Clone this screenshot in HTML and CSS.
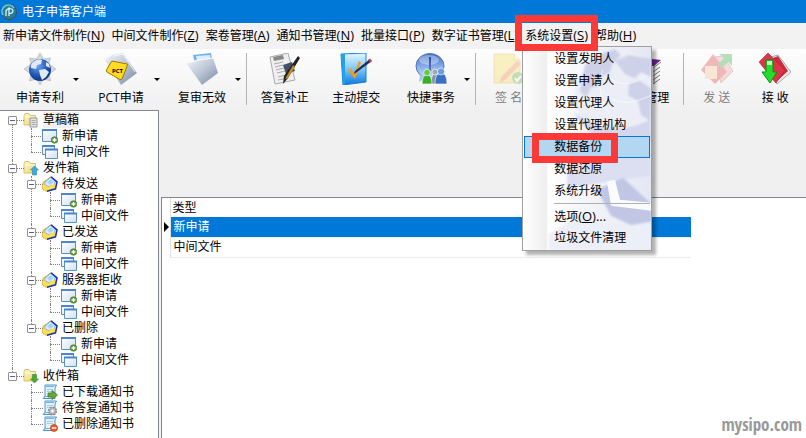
FILE: index.html
```
<!DOCTYPE html>
<html lang="zh-CN">
<head>
  <meta charset="UTF-8">
  <title>电子申请客户端</title>
  <link rel="stylesheet" href="styles.css">
</head>
<body>
  <!-- shared icons -->
  <svg class="sprite" aria-hidden="true">
    <defs>
      <linearGradient id="gFolder" x1="0" y1="0" x2="1" y2="1"><stop offset="0" stop-color="#fffbd0"/><stop offset="1" stop-color="#efcf62"/></linearGradient>
      <linearGradient id="gWin" x1="0" y1="0" x2="1" y2="1"><stop offset="0" stop-color="#fff"/><stop offset="1" stop-color="#cfdff2"/></linearGradient>
      <linearGradient id="gSilver" x1="0" y1="0" x2="1" y2="1"><stop offset="0" stop-color="#f4f6fa"/><stop offset=".5" stop-color="#bcc6d6"/><stop offset="1" stop-color="#76859f"/></linearGradient>
      <linearGradient id="gBook" x1="0" y1="0" x2="0" y2="1"><stop offset="0" stop-color="#e4f7ff"/><stop offset=".5" stop-color="#7cc8fa"/><stop offset="1" stop-color="#0b79dd"/></linearGradient>
      <radialGradient id="gGlobe" cx=".4" cy=".3" r=".8"><stop offset="0" stop-color="#6fa8ea"/><stop offset=".6" stop-color="#1d50b0"/><stop offset="1" stop-color="#0b2a70"/></radialGradient>
      <linearGradient id="gBubble" x1="0" y1="0" x2="0" y2="1"><stop offset="0" stop-color="#3a66c4"/><stop offset=".5" stop-color="#86abe8"/><stop offset="1" stop-color="#cfe0fa"/></linearGradient>
    </defs>
    <symbol id="folder" viewBox="0 0 16 16">
      <path d="M1 3.500l1-2h4l1.500 2h5v9.500H1z" fill="url(#gFolder)" stroke="#dcc070"/>
      <path d="M2 5h10" stroke="#fff" opacity=".8"/>
    </symbol>
    <symbol id="draft" viewBox="0 0 16 16">
      <use href="#folder"/>
      <path d="M7 6h7v9H7z" fill="#e2e2e2" stroke="#999"/>
      <path d="M8.500 8.500h4M8.500 10.500h4M8.500 12.500h4" stroke="#aaa"/>
    </symbol>
    <symbol id="outbox" viewBox="0 0 16 16">
      <use href="#folder"/>
      <path d="M11.500 6l4 4h-2v5h-4v-5h-2z" fill="#3cacdc" stroke="#2389b8" stroke-width=".6"/>
    </symbol>
    <symbol id="inbox" viewBox="0 0 16 16">
      <use href="#folder"/>
      <path d="M11.500 15l4-4h-2V6.500h-4V11h-2z" fill="#4aa83c" stroke="#338a2a" stroke-width=".6"/>
    </symbol>
    <symbol id="newwin" viewBox="0 0 16 16">
      <path d="M.5 1.500h14v12H.5z" fill="url(#gWin)" stroke="#5b8fc9"/>
      <path d="M0 1h15v2H0z" fill="#4d86c6"/>
      <circle cx="12.500" cy="12" r="3.300" fill="#5d963c" stroke="#3f7324" stroke-width=".6"/>
      <path d="M12.500 10v4M10.500 12h4" stroke="#fff" stroke-width="1.300"/>
    </symbol>
    <symbol id="wins" viewBox="0 0 16 16">
      <path d="M.5 1.500h12v9H.5z" fill="url(#gWin)" stroke="#5b8fc9"/>
      <path d="M0 1h13v2H0z" fill="#4d86c6"/>
      <path d="M3.500 5.500h12v9h-12z" fill="url(#gWin)" stroke="#5b8fc9"/>
      <path d="M3 4.500h13v2H3z" fill="#4d86c6"/>
    </symbol>
    <symbol id="mail" viewBox="0 0 16 16">
      <path d="M1 6.500L9 .8l6 5-1.500 7L4 15.200.8 13z" fill="#f9e06c" stroke="#d3a41c"/>
      <path d="M3 6l6-5 4.500 4-1.500 4-5 1.500L3 9z" fill="#d9efff" stroke="#5b9fe0" stroke-width=".7"/>
      <path d="M5 6l4-3 3 3-4 3z" fill="#a5d3f8"/>
      <path d="M1 8l5 3 8-4-1 6-9 2-3-2z" fill="#ffdf4c"/>
      <path d="M9 .8l6 5-1.500 7-8.500 2.400" fill="none" stroke="#1633bd" stroke-width="1.500"/>
    </symbol>
    <symbol id="scroll" viewBox="0 0 16 16">
      <path d="M3 1h11.500L13 4v10.500H1.500L3 12z" fill="#e3f2fd" stroke="#4b94d4"/>
      <path d="M4 2.500h8M1 14.500l2-2h9" stroke="#78b4e4" fill="none"/>
      <path d="M5 5.500h6M5 7.500h6" stroke="#a6cdec"/>
    </symbol>
    <symbol id="downloaded" viewBox="0 0 16 16">
      <use href="#scroll"/>
      <path d="M6 9h4V6.500l5.500 4.500-5.500 4.500V13H6z" fill="#62a83c" stroke="#3c7c22" stroke-width=".8"/>
    </symbol>
    <symbol id="waiting" viewBox="0 0 16 16">
      <use href="#scroll"/>
      <circle cx="10.500" cy="11" r="3.600" fill="#c8c8c8" stroke="#8b8b8b" stroke-width="2" stroke-dasharray="1.800 1"/>
      <circle cx="10.500" cy="11" r="2.900" fill="#c8c8c8" stroke="#999" stroke-width=".6"/>
      <circle cx="10.500" cy="11" r="1.200" fill="#fff"/>
    </symbol>
    <symbol id="deleted" viewBox="0 0 16 16">
      <use href="#scroll"/>
      <circle cx="12" cy="12" r="3.600" fill="#ee5a24" stroke="#c43d12" stroke-width=".6"/>
      <path d="M9.800 12h4.400" stroke="#fff" stroke-width="1.500"/>
    </symbol>
  </svg>

  <header class="titlebar">
    <svg class="logo" viewBox="0 0 16 16">
      <circle cx="8" cy="8" r="7.500" fill="#247f96" stroke="#504a4c"/>
      <path d="M2 11a6.500 6.500 0 0 1 11-7" fill="none" stroke="#70c6d8" stroke-width="1.500"/>
      <path d="M5 12V6.500L8 4v8M8 4.500q4 0 4 2.500T8 9.500" fill="none" stroke="#e6fbff" stroke-width="1.200"/>
    </svg>
    <h1>电子申请客户端</h1>
  </header>

  <nav class="menubar">
    <button>新申请文件制作<span class="key">(<u>N</u>)</span></button>
    <button>中间文件制作<span class="key">(<u>Z</u>)</span></button>
    <button>案卷管理<span class="key">(<u>A</u>)</span></button>
    <button>通知书管理<span class="key">(<u>N</u>)</span></button>
    <button>批量接口<span class="key">(<u>P</u>)</span></button>
    <button>数字证书管理<span class="key">(<u>L</u>)</span></button>
    <div class="menu open">
      <button>系统设置<span class="key">(<u>S</u>)</span></button>
      <div class="mark mark-menu"></div>
      <div class="popup">
        <svg class="popup-art" viewBox="0 0 104 202" preserveAspectRatio="none">
          <defs>
            <linearGradient id="art" x1="0" y1="0" x2="1" y2="0"><stop offset="0" stop-color="#fff"/><stop offset="1" stop-color="#c9cde6"/></linearGradient>
            <filter id="soft"><feGaussianBlur stdDeviation="1"/></filter>
          </defs>
          <path d="M0 0h104v202H0z" fill="url(#art)" opacity=".5"/>
          <g filter="url(#soft)">
            <circle cx="74" cy="50" r="46" fill="#eceef7"/>
            <path d="M38 18l18-12 12-4 6 6-8 8-3 9-8 4-2 9-9 3-5 9-6-6z" fill="#ced1e6"/>
            <path d="M68 14l14-6 22 4v18l-10-5-6 6-10-4zM82 36l10-3 12 8v33l-10-6-3-14-10-6z" fill="#ced2e8"/>
            <path d="M26 64q36 30 78 8v22q-52 14-78-30" fill="#ccd1ea" opacity=".8"/>
            <path d="M20 112l60-10 24 6v20l-84 12z" fill="#dcdff1"/>
            <path d="M50 142l26-12 28 26v30l-40-18z" fill="#c0c6e4"/>
            <path d="M2 186l34-20 30 14 38-6v28H2z" fill="#eceef8"/>
          </g>
          <path d="M60 134l8-2 5 20 31 3v8l-40-5z" fill="#fafbff"/>
          <path d="M62 30q16 14 38-2M56 44q16 20 48 4M56 22q-8 24 6 44" fill="none" stroke="#fff" opacity=".6"/>
        </svg>
        <button>设置发明人</button>
        <button>设置申请人</button>
        <button>设置代理人</button>
        <button>设置代理机构</button>
        <button class="active">数据备份<span class="mark mark-item"></span></button>
        <button>数据还原</button>
        <button>系统升级</button>
        <hr>
        <button>选项<span class="key">(<u>O</u>)...</span></button>
        <button>垃圾文件清理</button>
      </div>
    </div>
    <button>帮助<span class="key">(<u>H</u>)</span></button>
  </nav>

  <div class="toolbar">
    <div class="split">
      <button class="tool">
        <svg viewBox="0 0 32 32">
          <path d="M16 0l3.500 6 7-1-1.500 6 7 5-7 5 1.500 7-7-2L16 32l-3.500-6-7 2L7 21l-7-5 7-5-1.500-6 7 1z" fill="#d3d6da" stroke="#b0b4ba" stroke-width=".6"/>
          <circle cx="16" cy="17" r="11" fill="url(#gGlobe)"/>
          <path d="M9 9q5-4 9-2l-1 4-4 1-1 4-5-1q-1-3 2-6M15 17l6-1 4 3-3 5-4 3-2-5zM22 9l3 2 1 4-4-2z" fill="#dfe9f8"/>
        </svg>
        <span>申请专利</span>
      </button>
      <button class="drop" aria-label="更多"></button>
    </div>
    <div class="split">
      <button class="tool">
        <svg viewBox="0 0 32 32">
          <path d="M7 2l11-2 14 20-16 12L0 7z" fill="url(#gSilver)"/>
          <path d="M9 3l9-2 12 18" fill="none" stroke="#fff" opacity=".8"/>
          <path d="M7 8l15 3q1 0 .5 1L17 26q-1 1-2 .5L2 19q-1-1-.5-2L6 9z" fill="#ffdc22" stroke="#a07800"/>
          <text class="pct" x="7" y="20">PCT</text>
        </svg>
        <span>PCT申请</span>
      </button>
      <button class="drop" aria-label="更多"></button>
    </div>
    <div class="split">
      <button class="tool">
        <svg viewBox="0 0 32 32">
          <path d="M7 2l18-2 3 16-17 3z" fill="#6fb2f0"/>
          <path d="M10 3l14-1 2 10-14 3z" fill="#d8edff"/>
          <path d="M0 10l12-3 15-2 5 15-16 12z" fill="url(#gSilver)"/>
          <path d="M1 10l12-3 14-2" fill="none" stroke="#fff"/>
        </svg>
        <span>复审无效</span>
      </button>
      <button class="drop" aria-label="更多"></button>
    </div>
    <div class="sep"></div>
    <button class="tool wide">
      <svg viewBox="0 0 32 32">
        <path d="M1 4l18-4 7 27-20 4z" fill="#efefef" stroke="#aaa"/>
        <path d="M4 4l10-2 1 4-10 2z" fill="#888"/>
        <path d="M5 11l9-2M6 14l8-2M7 17l8-2M8 20l8-2M9 24l12-3M9 27l10-2" stroke="#aaa"/>
        <path d="M14 12l9-3 3 9-9 3z" fill="#41516a"/>
        <path d="M29 3l2 2-12 20-5 6 1-8z" fill="#222"/>
        <path d="M24 12l2 2-7 11-3 1z" fill="#c88b28"/>
      </svg>
      <span>答复补正</span>
    </button>
    <button class="tool wide">
      <svg viewBox="0 0 32 32">
        <path d="M1 1l25-1v29L3 32z" fill="url(#gBook)" stroke="#1682d8"/>
        <path d="M1 1h4v29l-2 2z" fill="#22a2ec"/>
        <path d="M8 17l3-2 3 6 5-13 2 1-6 17z" fill="#f69c18"/>
        <path d="M30 6l2 2-15 11-3 2 1-3z" fill="#222c58"/>
        <path d="M29 6l2 3" stroke="#d53c50" stroke-width="2"/>
      </svg>
      <span>主动提交</span>
    </button>
    <div class="split later">
      <button class="tool">
        <svg viewBox="0 0 32 32">
          <ellipse cx="15" cy="13" rx="14" ry="12.500" fill="url(#gBubble)" stroke="#5277b8"/>
          <path d="M5 22l-1 7 8-5z" fill="#a9c4ee"/>
          <ellipse cx="14" cy="7" rx="10" ry="5" fill="#fff" opacity=".35"/>
          <path d="M14 4h2l-.5 14h-1z" fill="#294c9c"/>
          <g stroke="#fff" stroke-width=".6">
            <path d="M16 31q0-10 4-10t4 10z" fill="#8a93a4"/><circle cx="20" cy="19" r="3" fill="#a0a9b8"/>
            <path d="M7 31q0-9 5-9t5 9z" fill="#3daf2d"/><circle cx="12" cy="19.500" r="3.300" fill="#62cc48"/>
            <path d="M20 31q0-11 6-11t6 11z" fill="#3b70c8"/><circle cx="26" cy="18.500" r="3.500" fill="#6a9ce2"/>
          </g>
        </svg>
        <span>快捷事务</span>
      </button>
      <button class="drop" aria-label="更多"></button>
    </div>
    <div class="sep"></div>
    <button class="tool" disabled>
      <svg viewBox="0 0 32 32">
        <path d="M1 1h20l6 6v23H1z" fill="#f6df58" stroke="#dcb93a"/>
        <path d="M21 1v6h6" fill="#fff3a8" stroke="#dcb93a"/>
        <path d="M24 8l4 3L12 27l-5 3 1-6z" fill="#ef8a54"/>
        <circle cx="25" cy="25" r="6" fill="#62b248"/>
        <path d="M22 25l2 3 4-5" fill="none" stroke="#fff" stroke-width="2"/>
      </svg>
      <span>签 名</span>
    </button>
    <button class="tool covered">
      <svg viewBox="0 0 32 32">
        <path d="M2 4l12 1 18 2-7 6L2 12z" fill="#6d2390"/>
        <path d="M24 15l8-6M24 19l7-5M24 23l7-5M24 27l7-5M24 31l7-5M25 13v18" stroke="#777"/>
        <path d="M2 10l20 4v18L2 27z" fill="#8f4cb0"/>
      </svg>
      <span>证书管理</span>
    </button>
    <div class="sep"></div>
    <button class="tool" disabled>
      <svg viewBox="0 0 32 32">
        <path d="M14 4l8-1 10 15-12 12z" fill="#f0a8a8" stroke="#c66"/>
        <path d="M0 17L12 1l14 18-12 12z" fill="#de4444"/>
        <path d="M4 13h12v13H4z" fill="#f8c890"/>
        <path d="M18 1h13v12l-4-4-6 6-4-4 6-6z" fill="#35ac45"/>
      </svg>
      <span>发 送</span>
    </button>
    <button class="tool">
      <svg viewBox="0 0 32 32">
        <path d="M12 4l7-2 13 17-14 12-6-6z" fill="#f2eeee" stroke="#888" stroke-width=".7"/>
        <path d="M14 5l5-2 10 15-12 11z" fill="#c92c3e"/>
        <path d="M0 9L9 0l17 17-9 13z" fill="#dc3448" stroke="#b02034" stroke-width=".6"/>
        <path d="M7 7h7v12h4l-7 11-8-11h4z" fill="#25dc2c" stroke="#0c8c18"/>
        <path d="M8 8h5v4H8z" fill="#c8ffc0"/>
      </svg>
      <span>接 收</span>
    </button>
  </div>

  <main>
    <aside class="tree">
      <ul>
        <li>
          <div class="node"><button class="toggle" aria-label="折叠"></button><svg><use href="#draft"/></svg><span class="current">草稿箱</span></div>
          <ul>
            <li><div class="node"><svg><use href="#newwin"/></svg><span>新申请</span></div></li>
            <li><div class="node"><svg><use href="#wins"/></svg><span>中间文件</span></div></li>
          </ul>
        </li>
        <li>
          <div class="node"><button class="toggle" aria-label="折叠"></button><svg><use href="#outbox"/></svg><span>发件箱</span></div>
          <ul>
            <li>
              <div class="node"><button class="toggle" aria-label="折叠"></button><svg><use href="#mail"/></svg><span>待发送</span></div>
              <ul>
                <li><div class="node"><svg><use href="#newwin"/></svg><span>新申请</span></div></li>
                <li><div class="node"><svg><use href="#wins"/></svg><span>中间文件</span></div></li>
              </ul>
            </li>
            <li>
              <div class="node"><button class="toggle" aria-label="折叠"></button><svg><use href="#mail"/></svg><span>已发送</span></div>
              <ul>
                <li><div class="node"><svg><use href="#newwin"/></svg><span>新申请</span></div></li>
                <li><div class="node"><svg><use href="#wins"/></svg><span>中间文件</span></div></li>
              </ul>
            </li>
            <li>
              <div class="node"><button class="toggle" aria-label="折叠"></button><svg><use href="#mail"/></svg><span>服务器拒收</span></div>
              <ul>
                <li><div class="node"><svg><use href="#newwin"/></svg><span>新申请</span></div></li>
                <li><div class="node"><svg><use href="#wins"/></svg><span>中间文件</span></div></li>
              </ul>
            </li>
            <li>
              <div class="node"><button class="toggle" aria-label="折叠"></button><svg><use href="#mail"/></svg><span>已删除</span></div>
              <ul>
                <li><div class="node"><svg><use href="#newwin"/></svg><span>新申请</span></div></li>
                <li><div class="node"><svg><use href="#wins"/></svg><span>中间文件</span></div></li>
              </ul>
            </li>
          </ul>
        </li>
        <li>
          <div class="node"><button class="toggle" aria-label="折叠"></button><svg><use href="#inbox"/></svg><span>收件箱</span></div>
          <ul>
            <li><div class="node"><svg><use href="#downloaded"/></svg><span>已下载通知书</span></div></li>
            <li><div class="node"><svg><use href="#waiting"/></svg><span>待答复通知书</span></div></li>
            <li><div class="node"><svg><use href="#deleted"/></svg><span>已删除通知书</span></div></li>
          </ul>
        </li>
      </ul>
    </aside>

    <section class="list">
      <table>
        <thead>
          <tr><td class="gutter"></td><th>类型</th></tr>
        </thead>
        <tbody>
          <tr class="selected"><td class="gutter"></td><td>新申请</td></tr>
          <tr><td class="gutter"></td><td>中间文件</td></tr>
        </tbody>
      </table>
      <p class="watermark">mysipo.com</p>
    </section>
  </main>
</body>
</html>
```
FILE: styles.css
```
*,
*::before {
  box-sizing: border-box;
}
body {
  margin: 0;
  min-height: 100vh;
  display: flex;
  flex-direction: column;
  background: #f0f0f0;
  color: #000;
  font-family: "Open Sans", "Noto Sans CJK SC", sans-serif;
  font-size: 12px;
  line-height: 16px;
}
button {
  margin: 0;
  padding: 0;
  border: none;
  background: none;
  color: inherit;
  font: inherit;
  white-space: nowrap;
}
.sprite {
  position: absolute;
  width: 0;
  height: 0;
}

/* title + menu */
.titlebar {
  display: flex;
  align-items: center;
  gap: 5px;
  height: 23px;
  padding-left: 1px;
  background: #0078d7;
  color: #fff;
}
.titlebar h1 {
  margin: 0;
  font-size: 12px;
  font-weight: normal;
}
.logo {
  width: 16px;
  height: 16px;
}
.menubar {
  display: flex;
  height: 26px;
  padding-left: 3px;
  gap: 7px;
  background: #f2f2f2;
}
.menubar > button,
.menu > button {
  height: 24px;
}
.key {
  font-size: 13px;
}
.menu {
  position: relative;
}
.mark {
  position: absolute;
  border: 7px solid #fb3937;
  z-index: 3;
}
.mark-menu {
  top: -8px;
  left: -10px;
  right: -10px;
  height: 36px;
}
.popup {
  position: absolute;
  top: 23px;
  left: -3px;
  z-index: 2;
  width: 130px;
  padding: 1px;
  border: 1px solid #a0a0a0;
  background: linear-gradient(to right, #fff, #eee 24px, #fff 25px);
  box-shadow: 4px 4px 3px rgba(0, 0, 0, 0.3);
}
.popup-art {
  position: absolute;
  top: 0;
  right: 0;
  width: 104px;
  height: 100%;
}
.popup button {
  position: relative;
  display: block;
  width: 100%;
  height: 22px;
  padding-left: 30px;
  text-align: left;
}
.popup .active {
  background: #b3d7f3;
  box-shadow: inset 0 0 0 1px #0078d7;
}
.mark-item {
  top: -3px;
  left: 8px;
  width: 86px;
  height: 30px;
}
.popup hr {
  position: relative;
  margin: 1px 0 1px 30px;
  border: none;
  border-top: 1px solid #b0b0b0;
}

/* toolbar */
.toolbar {
  display: flex;
  height: 61px;
  padding: 4px 0 0 9px;
  background: linear-gradient(#fdfdfd, #f0f0f0);
}
.split {
  display: flex;
  margin-right: 9px;
}
.split:has(+ .sep) {
  margin-right: 3px;
}
.later {
  margin-left: 8px;
}
.tool {
  display: flex;
  flex-direction: column;
  align-items: center;
  gap: 5px;
  width: 62px;
  height: 53px;
}
.tool svg {
  width: 32px;
  height: 32px;
}
.tool.wide {
  width: 72px;
}
.tool:disabled {
  color: #808080;
}
.tool:disabled svg {
  opacity: 0.35;
}
.tool.covered {
  margin: 0 7px 0 75px;
}
.tool:last-child {
  margin-left: -3px;
}
.pct {
  font: bold 6px "Open Sans", sans-serif;
}
.drop {
  width: 10px;
  height: 52px;
}
.drop::before {
  content: "";
  display: block;
  margin: 0 auto;
  width: 6px;
  border: 3px solid transparent;
  border-top-color: #000;
  border-bottom: none;
}
.sep {
  width: 1px;
  height: 52px;
  margin-right: 2px;
  background: #b4b4b4;
}

/* folders */
main {
  flex: 1;
  display: flex;
  gap: 2px;
}
.tree {
  flex: none;
  width: 159px;
  padding: 1px 0 6px 8px;
  border: 1px solid #828790;
  border-width: 1px 1px 0 0;
  background: #fff;
}
.tree ul {
  margin: 0;
  padding: 0;
  list-style: none;
}
.tree ul ul {
  margin-left: 19px;
}
.tree li {
  position: relative;
}
/* dotted branches */
.tree li::before {
  content: "";
  position: absolute;
  top: 0;
  bottom: 0;
  left: 4px;
  border-left: 1px dotted #808080;
}
.tree li:last-child::before {
  bottom: auto;
  height: 8px;
}
.tree > ul > li:first-child::before {
  top: 8px;
}
.node {
  position: relative;
  display: flex;
  align-items: center;
  height: 16px;
}
.node::before {
  content: "";
  position: absolute;
  top: 8px;
  left: 4px;
  width: 12px;
  border-top: 1px dotted #808080;
}
.node svg {
  width: 16px;
  height: 16px;
}
.node svg:first-child {
  margin-left: 15px;
}
.node span {
  margin-left: 4px;
}
.node .current {
  background: #f0f0f0;
}
.toggle {
  position: relative;
  width: 9px;
  height: 9px;
  margin-right: 6px;
  border: 1px solid #919191;
  border-radius: 1px;
  background: linear-gradient(#4b63a7, #4b63a7) center / 5px 1px no-repeat #fff;
}

/* right side */
.list {
  flex: 1;
  display: flex;
  flex-direction: column;
  margin-top: 87px;
  border: 1px solid #828790;
  border-width: 1px 0 0 1px;
  background: #fff;
}
table {
  width: 529px;
  border-collapse: collapse;
}
th,
td {
  height: 20px;
  padding: 0 2px;
  border-bottom: 1px solid #ececec;
  text-align: left;
  font-weight: normal;
}
td + td {
  padding-left: 3px;
}
thead th,
thead td {
  height: 19px;
  border-bottom: none;
}
.gutter {
  width: 8px;
  padding: 0 0 0 2px;
  border-right: 1px solid #e0e0e0;
  border-bottom: none;
}
.selected td:last-child {
  background: #0078d7;
  color: #fff;
}
.selected .gutter::before {
  content: "";
  display: block;
  width: 5px;
  border: 5px solid transparent;
  border-left-color: #000;
  border-right: none;
}
.watermark {
  margin: auto 4px 2px auto;
  color: #999;
  font: bold 17px/22px "Liberation Sans Narrow", "Open Sans Condensed", "DejaVu Sans Condensed", sans-serif;
}
```
